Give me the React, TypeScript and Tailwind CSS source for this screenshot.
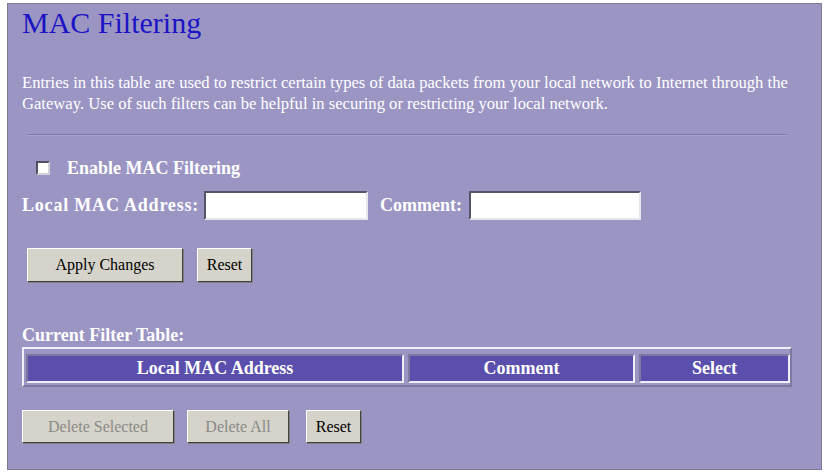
export default function App() {
  const serif = { fontFamily: '"Liberation Serif", "Times New Roman", serif' };
  const btn =
    "bg-[#d6d3ca] border border-t-white border-l-white border-r-[#404040] border-b-[#404040] shadow-[1px_1px_0_#808080] text-[16px] text-black";
  const field =
    "h-[29px] bg-white border-2 border-t-[#55556a] border-l-[#55556a] border-r-[#e6e6ee] border-b-[#e6e6ee] outline-none";
  const cell =
    "h-[29px] bg-[#5b4fae] border-2 border-t-[#7c78a0] border-l-[#7c78a0] border-r-[#f0eef8] border-b-[#f0eef8] flex items-center justify-center text-[18px] font-bold text-white";

  return (
    <div className="w-[826px] h-[473px] bg-white pt-[3px] pl-[7px]" style={serif}>
      <div className="w-[815px] h-[467px] bg-[#9b95c4] border border-[#7d7a92] pl-[14px] pr-[20px] pt-[4px]">
        <h1 className="text-[30px] leading-[30px] text-[#1c14c4]">MAC Filtering</h1>

        <p className="mt-[34px] text-[16.6px] leading-[21px] text-white">
          Entries in this table are used to restrict certain types of data packets from your local network to Internet through the Gateway. Use of such filters can be helpful in securing or restricting your local network.
        </p>

        <div className="mt-[20px] ml-[6px] w-[759px] h-[2px] border-t border-t-[#7c78a0] border-b border-b-[#aaa5d0]" />

        <label className="mt-[22px] ml-[14px] h-[20px] flex items-center gap-[17px] text-[18px] leading-[20px] font-bold text-white">
          <span className="w-[14px] h-[14px] bg-white border-2 border-t-[#505060] border-l-[#505060] border-r-[#d0d0d8] border-b-[#d0d0d8]" />
          Enable MAC Filtering
        </label>

        <div className="mt-[13px] flex items-center text-[18px] font-bold text-white">
          <span className="w-[182px] tracking-[0.8px]">Local MAC Address:</span>
          <input className={`${field} w-[164px]`} />
          <span className="ml-[12px] w-[89px]">Comment:</span>
          <input className={`${field} w-[172px]`} />
        </div>

        <div className="mt-[28px] ml-[5px] flex gap-[14px]">
          <button className={`${btn} w-[156px] h-[34px]`}>Apply Changes</button>
          <button className={`${btn} w-[55px] h-[34px]`}>Reset</button>
        </div>

        <div className="mt-[43px] text-[18px] font-bold text-white leading-[20px]">Current Filter Table:</div>

        <div className="mt-[2px] w-[770px] border-2 border-t-[#f0eef8] border-l-[#f0eef8] border-r-[#7c78a0] border-b-[#7c78a0] pl-[2px] pt-[5px] pb-[2px] flex gap-[4px]">
          <div className={`${cell} w-[378px]`}>Local MAC Address</div>
          <div className={`${cell} w-[227px]`}>Comment</div>
          <div className={`${cell} flex-1`}>Select</div>
        </div>

        <div className="mt-[23px] flex">
          <button disabled className={`${btn} w-[152px] h-[33px] !text-[#8a8a88]`}>Delete Selected</button>
          <button disabled className={`${btn} ml-[13px] w-[102px] h-[33px] !text-[#8a8a88]`}>Delete All</button>
          <button className={`${btn} ml-[17px] w-[55px] h-[33px]`}>Reset</button>
        </div>
      </div>
    </div>
  );
}
